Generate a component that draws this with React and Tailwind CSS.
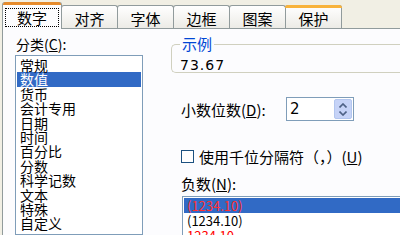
import React from "react";

const font = { fontFamily: '"Noto Sans CJK SC", "Liberation Sans", sans-serif' };

function Tab({ label, selected, hot }) {
  if (selected) {
    return (
      <div className="relative z-10 -mb-px h-[27px] w-[60px] border border-b-0 border-[#919b9c] rounded-t-[3px] bg-[#fcfcfe] flex items-center justify-center">
        <div className="absolute left-0 right-0 -top-px h-[3px] rounded-t-[3px] bg-[#e68b2c]" />
        <div className="mt-[3px] border border-dotted border-black h-[19px] w-[54px] flex items-center justify-center text-[15px] leading-none">
          {label}
        </div>
      </div>
    );
  }
  return (
    <div className="relative h-[23px] w-[57px] -ml-px border border-b-0 border-[#919b9c] rounded-t-[3px] bg-gradient-to-b from-[#ffffff] to-[#ecebe6] flex items-center justify-center text-[15px] leading-none">
      {hot && <div className="absolute left-[-1px] right-[-1px] -top-px h-[3px] rounded-t-[3px] bg-[#f8b33b]" />}
      <span className="mt-[2px]">{label}</span>
    </div>
  );
}

const cats = ["常规", "数值", "货币", "会计专用", "日期", "时间", "百分比", "分数", "科学记数", "文本", "特殊", "自定义"];

export default function App() {
  return (
    <div className="w-[400px] h-[235px] overflow-hidden bg-[#f1efe4] text-black" style={font}>
      <div className="flex items-end h-[28px] pl-[2px]">
        <Tab label="数字" selected />
        <Tab label="对齐" />
        <Tab label="字体" />
        <Tab label="边框" />
        <Tab label="图案" />
        <Tab label="保护" hot />
      </div>
      <div className="ml-[2px] h-[207px] border-l border-t border-[#919b9c] bg-[#fcfcfe] flex pl-[12px]">
        <div className="w-[128px] flex flex-col">
          <div className="h-[25px] pt-[8px] text-[14px] leading-none pl-[1px]">
            分类(<span className="underline">C</span>):
          </div>
          <div className="mt-[1px] flex-1 border border-[#7f9db9] bg-white pt-[2px] px-[1px]">
            {cats.map((c, i) => (
              <div
                key={c}
                className={
                  "h-[14.4px] text-[14px] leading-[14.4px] pl-[3px] " +
                  (i === 1 ? "bg-[#316ac5] text-white" : "")
                }
              >
                {c}
              </div>
            ))}
          </div>
        </div>
        <div className="ml-[28px] flex-1 flex flex-col">
          <div className="relative mt-[15px] h-[40px] border border-r-0 border-[#d0d0bf] rounded-l-[5px]">
            <div className="absolute left-[8px] -top-[9px] bg-[#fcfcfe] px-[2px] text-[15px] leading-none text-[#0046d5]">
              示例
            </div>
            <div className="pl-[8px] pt-[13px] text-[14px] leading-none tracking-[1px]" style={{ fontFamily: '"DejaVu Sans", sans-serif' }}>
              73.67
            </div>
          </div>
          <div className="mt-[24px] flex items-center pl-[10px]">
            <div className="w-[105px] text-[15px] leading-none">
              小数位数(<span className="underline">D</span>):
            </div>
            <div className="w-[68px] h-[24px] border border-[#7f9db9] bg-white flex items-center justify-between pl-[3px] pr-[1px]">
              <span className="text-[15px] leading-none" style={{ fontFamily: '"DejaVu Sans", sans-serif' }}>2</span>
              <div className="w-[18px] h-[20px] rounded-[2px] border border-[#b3c6ef] bg-[#c6d3f7] flex flex-col items-center justify-center gap-[3px]">
                <svg width="8" height="5" viewBox="0 0 8 5"><path d="M0.5 4.5 L4 1 L7.5 4.5" stroke="#4d6185" strokeWidth="1.6" fill="none" /></svg>
                <svg width="8" height="5" viewBox="0 0 8 5"><path d="M0.5 0.5 L4 4 L7.5 0.5" stroke="#4d6185" strokeWidth="1.6" fill="none" /></svg>
              </div>
            </div>
          </div>
          <div className="mt-[28px] flex items-center pl-[10px]">
            <div className="w-[13px] h-[13px] border border-[#1c5180] bg-white" />
            <div className="ml-[5px] text-[15px] leading-none">
              使用千位分隔符（，）(<span className="underline">U</span>)
            </div>
          </div>
          <div className="mt-[12px] pl-[10px] text-[15px] leading-none">
            负数(<span className="underline">N</span>):
          </div>
          <div className="mt-[5px] ml-[11px] flex-1 border border-[#7f9db9] border-r-0 bg-white pt-[1px] pl-[1px] text-[13px]">
            <div className="h-[15px] leading-[15px] bg-[#316ac5] text-[#ff3030] pl-[3px]">(1234.10)</div>
            <div className="h-[15px] leading-[15px] pl-[3px]">(1234.10)</div>
            <div className="h-[15px] leading-[15px] pl-[3px] text-[#ff0000]">1234.10</div>
          </div>
        </div>
      </div>
    </div>
  );
}
